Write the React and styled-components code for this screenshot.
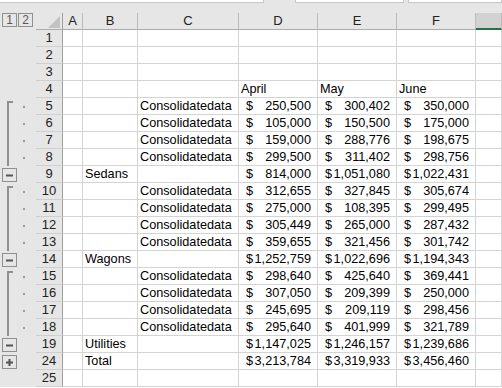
import React from 'react';
import styled, { createGlobalStyle, css } from 'styled-components';

const GlobalStyle = createGlobalStyle`
  html, body {
    margin: 0;
    padding: 0;
    background: #fff;
    overflow: hidden;
  }
  body {
    font-family: "Liberation Sans", Arial, sans-serif;
  }
`;

const GRID = '36px 27px 20px 55px 101px 79px 79px 79px 1fr';

const Sheet = styled.div`
  width: 502px;
  height: 388px;
  overflow: hidden;
  background: #fff;
`;

const TopBar = styled.div`
  height: 13px;
  background: #e6e6e6;
  display: flex;
  align-items: flex-start;
`;

const FieldBox = styled.div`
  box-sizing: border-box;
  height: 3px;
  width: ${p => p.$w}px;
  margin-left: ${p => p.$gap || 0}px;
  flex: ${p => p.$grow ? 1 : 'none'};
  background: #fff;
  border: 1px solid #c6c6c6;
  border-top: none;
  ${p => p.$noLeft && css`border-left: none;`}
`;

const Row = styled.div`
  display: grid;
  grid-template-columns: ${GRID};
  height: 17px;
`;

const HeadRow = styled(Row)`
  background: #e6e6e6;
`;

const OutlineHead = styled.div`
  display: flex;
  align-items: flex-start;
  gap: 1px;
  padding-left: 2px;
`;

const LevelButton = styled.div`
  box-sizing: border-box;
  width: 15px;
  height: 14px;
  border: 1px solid #8f8f8f;
  color: #5a5a5a;
  font-size: 12px;
  line-height: 12px;
  text-align: center;
`;

const Corner = styled.div`
  box-sizing: border-box;
  border-right: 1px solid #9f9f9f;
  border-bottom: 1px solid #ababab;
  display: flex;
  justify-content: flex-end;
  align-items: flex-end;
  padding: 0 1px 0 0;
`;

const ColHeader = styled.div`
  box-sizing: border-box;
  border-right: 1px solid #bcbcbc;
  border-bottom: ${p => p.$active ? '2px solid #217346' : '1px solid #ababab'};
  background: ${p => p.$active ? '#d2d2d2' : 'transparent'};
  color: #222;
  font-size: 13px;
  line-height: 16px;
  text-align: center;
`;

const OutlineCell = styled.div`
  background: #e6e6e6;
  display: flex;
  align-items: center;
  padding-left: 2px;
`;

const Bracket = styled.span`
  box-sizing: border-box;
  align-self: stretch;
  width: 6px;
  margin-left: 5px;
  margin-top: ${p => p.$start ? '3px' : 0};
  border-left: 2px solid #8f8f8f;
  border-top: ${p => p.$start ? '2px solid #8f8f8f' : 'none'};
`;

const Dot = styled.span`
  width: 2px;
  height: 2px;
  margin-left: 10px;
  background: #9a9a9a;
`;

const Toggle = styled.div`
  box-sizing: border-box;
  width: 15px;
  height: 14px;
  margin-top: 1px;
  border: 1px solid #8f8f8f;
  display: flex;
  align-items: center;
  justify-content: center;
`;

const RowHeader = styled.div`
  box-sizing: border-box;
  background: #e6e6e6;
  border-right: 1px solid #9f9f9f;
  border-bottom: 1px solid #cfcfcf;
  color: #222;
  font-size: 13px;
  line-height: 16px;
  text-align: center;
`;

const Cell = styled.div`
  box-sizing: border-box;
  border-right: 1px solid #d4d4d4;
  border-bottom: 1px solid #d4d4d4;
  font-size: 12.7px;
  line-height: 16px;
  color: #000;
  white-space: nowrap;
  padding-left: 2px;
  overflow: visible;
`;

const MoneyCell = styled(Cell)`
  display: flex;
  justify-content: space-between;
  padding: 0 6px 0 7px;
`;

const rows = [
  { n: 1 }, { n: 2 }, { n: 3 },
  { n: 4, months: ['April', 'May', 'June'] },
  { n: 5, o: 'start', c: 'Consolidatedata', v: ['250,500', '300,402', '350,000'] },
  { n: 6, o: 'mid', c: 'Consolidatedata', v: ['105,000', '150,500', '175,000'] },
  { n: 7, o: 'mid', c: 'Consolidatedata', v: ['159,000', '288,776', '198,675'] },
  { n: 8, o: 'mid', c: 'Consolidatedata', v: ['299,500', '311,402', '298,756'] },
  { n: 9, o: 'minus', b: 'Sedans', v: ['814,000', '1,051,080', '1,022,431'] },
  { n: 10, o: 'start', c: 'Consolidatedata', v: ['312,655', '327,845', '305,674'] },
  { n: 11, o: 'mid', c: 'Consolidatedata', v: ['275,000', '108,395', '299,495'] },
  { n: 12, o: 'mid', c: 'Consolidatedata', v: ['305,449', '265,000', '287,432'] },
  { n: 13, o: 'mid', c: 'Consolidatedata', v: ['359,655', '321,456', '301,742'] },
  { n: 14, o: 'minus', b: 'Wagons', v: ['1,252,759', '1,022,696', '1,194,343'] },
  { n: 15, o: 'start', c: 'Consolidatedata', v: ['298,640', '425,640', '369,441'] },
  { n: 16, o: 'mid', c: 'Consolidatedata', v: ['307,050', '209,399', '250,000'] },
  { n: 17, o: 'mid', c: 'Consolidatedata', v: ['245,695', '209,119', '298,456'] },
  { n: 18, o: 'mid', c: 'Consolidatedata', v: ['295,640', '401,999', '321,789'] },
  { n: 19, o: 'minus', b: 'Utilities', v: ['1,147,025', '1,246,157', '1,239,686'] },
  { n: 24, o: 'plus', b: 'Total', v: ['3,213,784', '3,319,933', '3,456,460'] },
  { n: 25 },
];

const ToggleIcon = ({ plus }) => (
  <svg width="9" height="9" viewBox="0 0 9 9">
    <rect x="1" y="3.5" width="7" height="2" fill="#555" />
    {plus && <rect x="3.5" y="1" width="2" height="7" fill="#555" />}
  </svg>
);

const Outline = ({ type }) => {
  if (type === 'start' || type === 'mid') {
    return (
      <OutlineCell>
        <Bracket $start={type === 'start'} />
        <Dot />
      </OutlineCell>
    );
  }
  if (type === 'minus' || type === 'plus') {
    return (
      <OutlineCell>
        <Toggle><ToggleIcon plus={type === 'plus'} /></Toggle>
      </OutlineCell>
    );
  }
  return <OutlineCell />;
};

const Money = ({ value }) => (
  <MoneyCell>
    <span>$</span>
    <span>{value}</span>
  </MoneyCell>
);

export default function App() {
  return (
    <Sheet>
      <GlobalStyle />
      <TopBar>
        <FieldBox $w={264} $noLeft />
        <FieldBox $w={109} $gap={31} />
        <FieldBox $grow $gap={4} />
      </TopBar>
      <HeadRow>
        <OutlineHead>
          <LevelButton>1</LevelButton>
          <LevelButton>2</LevelButton>
        </OutlineHead>
        <Corner>
          <svg width="14" height="14" viewBox="0 0 14 14">
            <polygon points="1,13 13,13 13,1" fill="#c2c2c2" />
          </svg>
        </Corner>
        {['A', 'B', 'C', 'D', 'E', 'F'].map(k => (
          <ColHeader key={k}>{k}</ColHeader>
        ))}
        <ColHeader $active />
      </HeadRow>
      {rows.map(r => (
        <Row key={r.n}>
          <Outline type={r.o} />
          <RowHeader>{r.n}</RowHeader>
          <Cell />
          <Cell>{r.b}</Cell>
          <Cell>{r.c}</Cell>
          {r.v
            ? r.v.map((v, i) => <Money key={i} value={v} />)
            : [0, 1, 2].map(i => <Cell key={i}>{r.months ? r.months[i] : null}</Cell>)}
          <Cell />
        </Row>
      ))}
    </Sheet>
  );
}
